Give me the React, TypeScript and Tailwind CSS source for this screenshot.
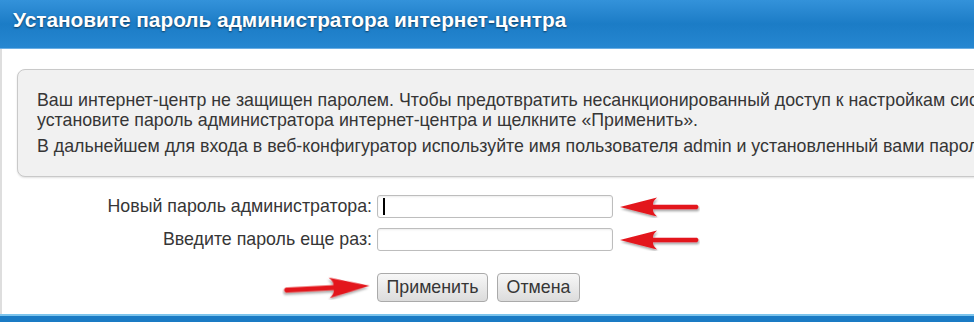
import React from "react";

const font = { fontFamily: '"Liberation Sans", Arial, sans-serif' };

function Arrow({ flip = false, className = "" }: { flip?: boolean; className?: string }) {
  const id = flip ? "sh2" : "sh1";
  return (
    <svg
      viewBox="0 0 80 22"
      className={className}
      style={{ transform: flip ? "scaleX(-1) rotate(3deg)" : undefined }}
    >
      <defs>
        <filter id={id} x="-10%" y="-30%" width="130%" height="180%">
          <feDropShadow dx="1" dy="2" stdDeviation="1.2" floodColor="#000" floodOpacity="0.35" />
        </filter>
      </defs>
      <path
        d="M0 11 L37 1.5 Q32.5 5.5 33 8.7 L77 8.8 Q80 11 77 13.2 L33 13.3 Q32.5 16.5 37 20.5 Z"
        fill="#e3161c"
        filter={`url(#${id})`}
      />
    </svg>
  );
}

export default function App() {
  return (
    <div className="flex h-[322px] w-[974px] flex-col overflow-hidden bg-white text-[#363636]" style={font}>
      <div className="h-[49px] shrink-0 border-b border-[#6aaee4] bg-linear-to-b from-[#3392da] via-[#1b7cc6] to-[#2687d1] pl-[13px] pt-[8px]">
        <h1 className="text-[20.8px] font-bold leading-6 text-white [text-shadow:0_1px_2px_rgba(0,0,0,0.55)]">
          Установите пароль администратора интернет-центра
        </h1>
      </div>

      <div className="flex flex-1 flex-col border-l-2 border-[#dedede] pl-[15px] pt-[20px]">
        <div className="w-[1100px] rounded-[8px] border border-[#c9c9c9] bg-[#f1f1f1] pb-[20px] pl-[19px] pt-[20px] text-[17.8px] leading-5 shadow-[0_1px_2px_rgba(0,0,0,0.12)]">
          <p className="whitespace-nowrap">
            Ваш интернет-центр не защищен паролем. Чтобы предотвратить несанкционированный доступ к настройкам системы,
            <br />
            установите пароль администратора интернет-центра и щелкните «Применить».
          </p>
          <p className="mt-[6px] whitespace-nowrap">
            В дальнейшем для входа в веб-конфигуратор используйте имя пользователя admin и установленный вами пароль.
          </p>
        </div>

        <div className="-ml-[17px] mt-[18px] flex flex-col gap-[10px] text-[17.8px] leading-[23px]">
          <div className="flex h-[23px] items-center gap-[5px]">
            <label className="w-[372px] text-right">Новый пароль администратора:</label>
            <div className="relative">
              <input
                type="password"
                className="block h-[23px] w-[236px] rounded-[3px] border border-[#bdbdbd] bg-white shadow-[inset_0_1px_2px_rgba(0,0,0,0.08)] outline-none"
              />
              <span className="absolute left-[6px] top-[3px] h-[17px] w-[2px] bg-black" />
            </div>
            <Arrow className="ml-[2px] h-[22px] w-[80px]" />
          </div>
          <div className="flex h-[23px] items-center gap-[5px]">
            <label className="w-[372px] text-right">Введите пароль еще раз:</label>
            <input
              type="password"
              className="block h-[23px] w-[236px] rounded-[3px] border border-[#bdbdbd] bg-white shadow-[inset_0_1px_2px_rgba(0,0,0,0.08)] outline-none"
            />
            <Arrow className="ml-[2px] h-[22px] w-[80px]" />
          </div>
          <div className="mt-[12px] flex items-center gap-[5px]">
            <div className="flex w-[372px] justify-end pr-[2px]">
              <Arrow flip className="h-[24px] w-[88px]" />
            </div>
            <button className="h-[29px] w-[111px] rounded-[4px] border border-[#aaa] bg-linear-to-b from-[#f7f7f7] to-[#dcdcdc] text-[17.8px] text-[#363636]">
              Применить
            </button>
            <button className="ml-[4px] h-[29px] w-[83px] rounded-[4px] border border-[#aaa] bg-linear-to-b from-[#f7f7f7] to-[#dcdcdc] text-[17.8px] text-[#363636]">
              Отмена
            </button>
          </div>
        </div>
      </div>

      <div className="h-[8px] shrink-0 border-t-2 border-[#7cc4ec] bg-[#1a7bc4]" />
    </div>
  );
}
